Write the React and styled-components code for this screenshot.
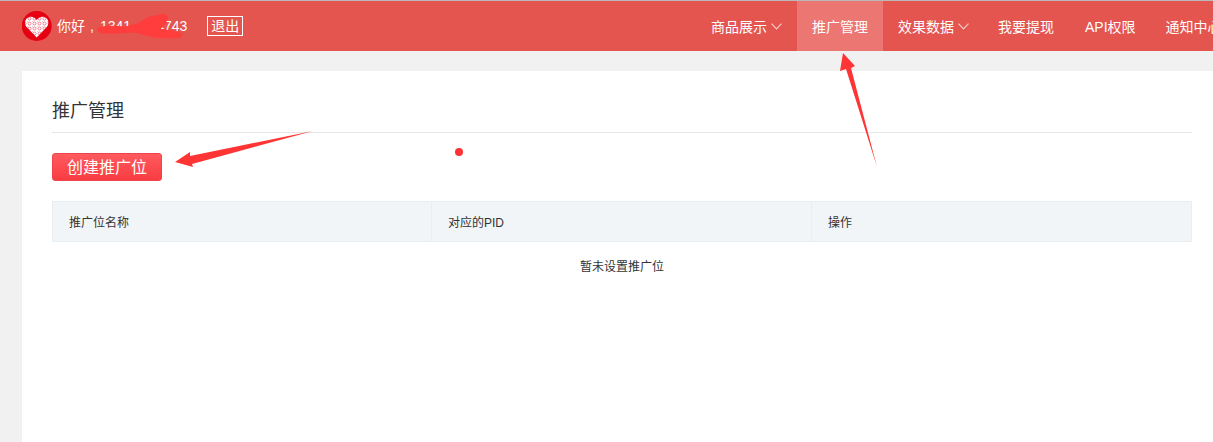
import React from 'react'
import styled, { createGlobalStyle } from 'styled-components'

const fontStack = `"Liberation Sans", "Noto Sans CJK SC", sans-serif`

const GlobalStyle = createGlobalStyle`
  html, body {
    margin: 0;
    padding: 0;
    height: 442px;
    overflow: hidden;
    background: #f1f1f1;
    font-family: ${fontStack};
  }
`

const Page = styled.div`
  position: relative;
  width: 1213px;
  height: 442px;
  overflow: hidden;
`

const Header = styled.header`
  display: flex;
  height: 50px;
  border-top: 1px solid #b9b9b9;
  background: #e3554e;
  color: #fff;
  font-size: 14px;
`

const UserBox = styled.div`
  flex: 0 0 696px;
  display: flex;
  align-items: center;
  padding-left: 22px;
  box-sizing: border-box;
`

const Greeting = styled.span`
  margin-left: 5px;
  line-height: 50px;
  white-space: nowrap;
`

const Comma = styled.span`
  display: inline-block;
  width: 15px;
  padding-left: 5px;
  box-sizing: border-box;
`

const Masked = styled.span`
  display: inline-block;
  width: 25px;
`

const Logout = styled.a`
  margin-left: 20px;
  padding: 0 3px;
  border: 1px solid #fff;
  font-size: 14px;
  line-height: 18px;
  color: #fff;
`

const Nav = styled.nav`
  display: flex;
  flex: none;
`

const NavItem = styled.a`
  display: flex;
  align-items: center;
  gap: 4px;
  padding: 0 15px;
  color: #fff;
  white-space: nowrap;
  background: ${p => (p.$active ? '#ec7671' : 'transparent')};
  &:nth-child(3) {
    padding-right: 14px;
  }
  &:nth-child(4) {
    padding-right: 16px;
  }
`

const Card = styled.main`
  width: 1200px;
  height: 371px;
  margin: 20px 0 0 22px;
  padding: 25px 30px 0;
  box-sizing: border-box;
  background: #fff;
`

const Title = styled.h2`
  margin: 0;
  height: 36px;
  border-bottom: 1px solid #e6e6e6;
  font-size: 18px;
  font-weight: 400;
  line-height: 30px;
  color: #333;
`

const CreateButton = styled.button`
  display: block;
  width: 110px;
  height: 28px;
  margin-top: 20px;
  padding: 2px 0 0;
  border: 1px solid #ee4449;
  border-radius: 3px;
  background: linear-gradient(#ff5a5f, #f93d42);
  color: #fff;
  font-family: inherit;
  font-size: 16px;
  line-height: 24px;
`

const Table = styled.table`
  width: 100%;
  margin-top: 20px;
  border-collapse: separate;
  border-spacing: 0;
  table-layout: fixed;
  font-size: 12px;
  color: #333;
`

const HeadCell = styled.th`
  box-sizing: border-box;
  height: 41px;
  padding: 0 16px;
  border: solid #e9eef2;
  border-width: 1px 1px 1px 0;
  background: #f1f5f8;
  font-weight: 400;
  text-align: left;
  &:first-child {
    border-left-width: 1px;
  }
`

const EmptyCell = styled.td`
  height: 47px;
  padding: 0 0 1px;
  text-align: center;
`

const Overlay = styled.svg`
  position: absolute;
  top: 0;
  left: 0;
  pointer-events: none;
`

const Chevron = () => (
  <svg width="11" height="7" viewBox="0 0 11 7" fill="none" stroke="#f7c9c6" strokeWidth="1.2">
    <path d="M.5.7 5.5 6 10.5.7" />
  </svg>
)

const Logo = () => (
  <svg width="30" height="30" viewBox="0 0 30 30">
    <defs>
      <pattern id="rosette" width="5" height="5" patternUnits="userSpaceOnUse">
        <rect width="5" height="5" fill="#fff" />
        <circle cx="2.5" cy="2.5" r="1.5" fill="none" stroke="#ec5f72" strokeWidth="0.8" />
        <rect width="0.7" height="0.7" fill="#f08a98" />
      </pattern>
    </defs>
    <circle cx="14.7" cy="15" r="15" fill="#e60012" />
    <path
      d="M14.7 26.5 4.6 16C1.8 12.8 2.8 7.2 7.2 6 10.4 5.2 13.2 6.6 14.7 9 16.2 6.6 19 5.2 22.2 6 26.6 7.2 27.6 12.8 24.8 16Z"
      fill="url(#rosette)"
    />
  </svg>
)

const navItems = [
  { label: '商品展示', menu: true },
  { label: '推广管理', active: true },
  { label: '效果数据', menu: true },
  { label: '我要提现' },
  { label: 'API权限' },
  { label: '通知中心' }
]

export default function App () {
  return (
    <Page>
      <GlobalStyle />
      <Header>
        <UserBox>
          <Logo />
          <Greeting>你好<Comma>,</Comma>1341<Masked />4743</Greeting>
          <Logout>退出</Logout>
        </UserBox>
        <Nav>
          {navItems.map(item => (
            <NavItem key={item.label} $active={item.active}>
              {item.label}
              {item.menu && <Chevron />}
            </NavItem>
          ))}
        </Nav>
      </Header>
      <Card>
        <Title>推广管理</Title>
        <CreateButton>创建推广位</CreateButton>
        <Table>
          <thead>
            <tr>
              <HeadCell>推广位名称</HeadCell>
              <HeadCell>对应的PID</HeadCell>
              <HeadCell>操作</HeadCell>
            </tr>
          </thead>
          <tbody>
            <tr>
              <EmptyCell colSpan={3}>暂未设置推广位</EmptyCell>
            </tr>
          </tbody>
        </Table>
      </Card>
      {/* annotations drawn on top of the screenshot */}
      <Overlay width="1213" height="442" viewBox="0 0 1213 442">
        <polygon
          points="98,28 108,26 125,27 137,24 150,17 165,14 168,17 165,24 160,29 172,31 182,34 181,37 170,38 155,37 145,35 135,32 118,33 102,33 98,31"
          fill="#ff3d3d"
          stroke="#ff3d3d"
          strokeLinejoin="round"
        />
        <polygon points="843,53 855,66 851,68 877,167 846,69 840,71" fill="#ff3535" />
        <polygon points="175,162 190,152 190,156 313,131 192,164 193,167" fill="#ff3535" />
        <circle cx="459" cy="152" r="4" fill="#f33" />
      </Overlay>
    </Page>
  )
}
